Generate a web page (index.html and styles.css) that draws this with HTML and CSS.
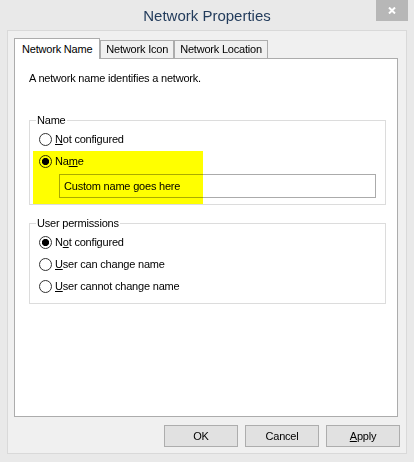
FILE: index.html
```html
<!DOCTYPE html>
<html lang="en">

<head>
    <meta charset="UTF-8">
    <meta name="viewport" content="width=device-width, initial-scale=1.0">
    <title>Network Properties</title>
    <link rel="stylesheet" href="styles.css">
</head>

<body>
    <div class="window">
        <header class="titlebar">
            <span class="title">Network Properties</span>
            <button class="close" aria-label="Close">
                <svg width="8" height="7" viewBox="0 0 8 7">
                    <path d="M1 0.5 L7 6.5 M7 0.5 L1 6.5" stroke="#fff" stroke-width="2" fill="none"/>
                </svg>
            </button>
        </header>

        <section class="client">
            <nav class="tabs">
                <div class="tab active">Network Name</div>
                <div class="tab">Network Icon</div>
                <div class="tab">Network Location</div>
            </nav>

            <article class="panel">
                <p class="intro">A network name identifies a network.</p>

                <fieldset class="group">
                    <legend>Name</legend>
                    <label class="option"><span class="radio"></span><span><u>N</u>ot configured</span></label>
                    <div class="custom">
                        <label class="option"><span class="radio checked"></span><span>Na<u>m</u>e</span></label>
                        <div class="textbox">Custom name goes here</div>
                        <span class="highlight"></span>
                    </div>
                </fieldset>

                <fieldset class="group second">
                    <legend>User permissions</legend>
                    <label class="option"><span class="radio checked"></span><span>N<u>o</u>t configured</span></label>
                    <label class="option"><span class="radio"></span><span><u>U</u>ser can change name</span></label>
                    <label class="option"><span class="radio"></span><span><u>U</u>ser cannot change name</span></label>
                </fieldset>
            </article>

            <footer class="buttons">
                <button class="btn">OK</button>
                <button class="btn">Cancel</button>
                <button class="btn"><u>A</u>pply</button>
            </footer>
        </section>
    </div>
</body>

</html>
```

FILE: styles.css
```css
html {
    box-sizing: border-box;
    font-family: "Liberation Sans", Arial, sans-serif;
    font-size: 11px;
}

*,
*:before,
*:after {
    box-sizing: inherit;
}

body {
    margin: 0;
    background-color: #e9e9e9;
    color: #000;
    letter-spacing: -0.2px;
}

.window {
    width: 414px;
    height: 462px;
}

/* title bar */
.titlebar {
    position: relative;
    height: 30px;
    display: flex;
    justify-content: center;
    align-items: center;
}

.title {
    font-size: 15px;
    letter-spacing: 0;
    color: #233c5c;
}

.close {
    position: absolute;
    top: 0;
    right: 6px;
    width: 32px;
    height: 21px;
    padding: 0;
    border: none;
    background-color: #b7b7b7;
    display: flex;
    justify-content: center;
    align-items: center;
}

/* client area */
.client {
    margin: 0 7px;
    height: 424px;
    border: 1px solid #d9d9d9;
    background-color: #f0f0f0;
    padding: 7px 6px 6px 6px;
    display: flex;
    flex-direction: column;
}

.tabs {
    display: flex;
    align-items: flex-start;
    height: 20px;
}

.tab {
    margin-top: 2px;
    height: 18px;
    padding: 0 5px;
    border: 1px solid #acacac;
    border-bottom: none;
    background-color: #f0f0f0;
    line-height: 16px;
    white-space: nowrap;
}

.tab.active {
    position: relative;
    z-index: 1;
    margin-top: 0;
    height: 21px;
    margin-bottom: -1px;
    padding: 0 7px;
    background-color: #fff;
    line-height: 20px;
}

.panel {
    height: 359px;
    margin-right: 2px;
    border: 1px solid #acacac;
    background-color: #fff;
    padding: 0 11px 0 14px;
}

.intro {
    margin: 12px 0 0;
    line-height: 15px;
}

/* group boxes */
.group {
    margin: 27px 0 0;
    min-width: 0;
    border: 1px solid #dcdcdc;
    padding: 0 9px 6px 9px;
}

.group.second {
    margin-top: 11px;
}

.group legend {
    margin-left: -3px;
    padding: 0 1px;
    line-height: 15px;
}

.option {
    display: flex;
    align-items: center;
    height: 22px;
}

.radio {
    width: 13px;
    height: 13px;
    margin-right: 3px;
    border: 1px solid #333;
    border-radius: 50%;
    background-color: #fff;
}

.radio.checked {
    background: radial-gradient(circle, #000 3.3px, #fff 3.9px);
}

.custom {
    position: relative;
}

.textbox {
    margin: 2px 0 0 20px;
    height: 24px;
    border: 1px solid #ababab;
    padding: 0 4px;
    line-height: 22px;
    background-color: #fff;
}

/* marker over the custom name row */
.highlight {
    position: absolute;
    left: -6px;
    top: 1px;
    width: 170px;
    height: 53px;
    background-color: #ffff00;
    mix-blend-mode: multiply;
    pointer-events: none;
}

/* dialog buttons */
.buttons {
    margin-top: 8px;
    display: flex;
    justify-content: flex-end;
    gap: 7px;
}

.btn {
    width: 74px;
    height: 22px;
    padding: 0;
    border: 1px solid #adadad;
    background-color: #e1e1e1;
    font-family: inherit;
    font-size: 11px;
    letter-spacing: -0.2px;
    color: #000;
}
```
